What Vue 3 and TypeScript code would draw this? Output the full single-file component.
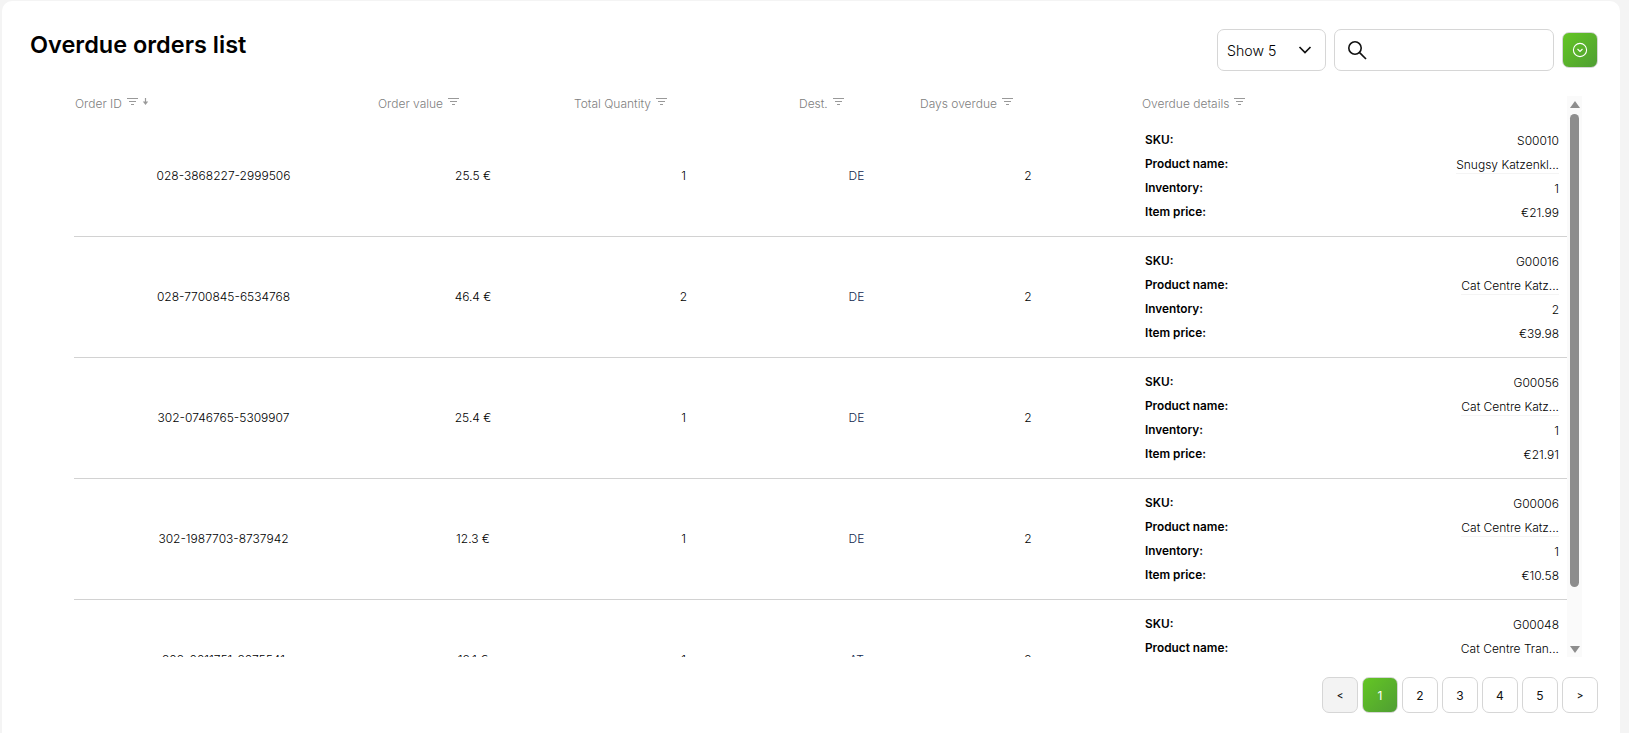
<script setup lang="ts">
import { ref } from 'vue'

interface Order {
  id: string
  value: string
  qty: number
  dest: string
  days: number
  sku: string
  name: string
  inventory: number
  price: string
}

const orders = ref<Order[]>([
  { id: '028-3868227-2999506', value: '25.5 €', qty: 1, dest: 'DE', days: 2, sku: 'S00010', name: 'Snugsy Katzenkl...', inventory: 1, price: '€21.99' },
  { id: '028-7700845-6534768', value: '46.4 €', qty: 2, dest: 'DE', days: 2, sku: 'G00016', name: 'Cat Centre Katz...', inventory: 2, price: '€39.98' },
  { id: '302-0746765-5309907', value: '25.4 €', qty: 1, dest: 'DE', days: 2, sku: 'G00056', name: 'Cat Centre Katz...', inventory: 1, price: '€21.91' },
  { id: '302-1987703-8737942', value: '12.3 €', qty: 1, dest: 'DE', days: 2, sku: 'G00006', name: 'Cat Centre Katz...', inventory: 1, price: '€10.58' },
  { id: '302-0011751-3075541', value: '18.1 €', qty: 1, dest: 'AT', days: 2, sku: 'G00048', name: 'Cat Centre Tran...', inventory: 1, price: '€15.60' },
])

const headers = ['Order ID', 'Order value', 'Total Quantity', 'Dest.', 'Days overdue', 'Overdue details']
const pages = [1, 2, 3, 4, 5]
</script>

<template>
  <div class="page">
    <section class="card">
      <header class="top">
        <h1>Overdue orders list</h1>
        <div class="tools">
          <div class="select">
            <span>Show 5</span>
            <svg width="14" height="8" viewBox="0 0 14 8" fill="none"><path d="M1.5 1l5.5 5.5L12.5 1" stroke="#111" stroke-width="1.7"/></svg>
          </div>
          <div class="search">
            <svg width="21" height="21" viewBox="0 0 21 21" fill="none"><circle cx="8" cy="8" r="6.2" stroke="#111" stroke-width="1.6"/><path d="M12.600 12.600L19 19" stroke="#111" stroke-width="1.7"/></svg>
          </div>
          <button class="go" type="button">
            <svg width="16" height="16" viewBox="0 0 16 16" fill="none"><circle cx="8" cy="8" r="6.6" stroke="#fff" stroke-width="1.1"/><path d="M5.5 7l2.5 2.5L10.500 7" stroke="#fff" stroke-width="1.1"/></svg>
          </button>
        </div>
      </header>

      <div class="table-wrap">
        <div class="table">
          <div class="row head">
            <div v-for="(h, i) in headers" :key="h" class="th">
              {{ h }}
              <svg class="filter" width="11" height="8" viewBox="0 0 11 8"><path d="M0 .5h11M2 3.500h7M4 6.500h3" stroke="#999" stroke-width="1"/></svg>
              <svg v-if="i === 0" class="sort" width="7" height="8" viewBox="0 0 7 8"><path d="M3.500 0v4" stroke="#999" stroke-width="1.200"/><path d="M.8 3.500h5.400L3.500 7z" fill="#999"/></svg>
            </div>
          </div>
          <div v-for="o in orders" :key="o.id" class="row body">
            <div class="td">{{ o.id }}</div>
            <div class="td">{{ o.value }}</div>
            <div class="td">{{ o.qty }}</div>
            <div class="td dest">{{ o.dest }}</div>
            <div class="td">{{ o.days }}</div>
            <dl class="details">
              <div><dt>SKU:</dt><dd>{{ o.sku }}</dd></div>
              <div><dt>Product name:</dt><dd class="name">{{ o.name }}</dd></div>
              <div><dt>Inventory:</dt><dd>{{ o.inventory }}</dd></div>
              <div><dt>Item price:</dt><dd>{{ o.price }}</dd></div>
            </dl>
          </div>
        </div>
        <div class="scrollbar" aria-hidden="true">
          <i class="up"></i>
          <i class="thumb"></i>
          <i class="down"></i>
        </div>
      </div>

      <nav class="pager">
        <button class="pg arrow prev" type="button">&lt;</button>
        <button v-for="p in pages" :key="p" class="pg" :class="{ on: p === 1 }" type="button">{{ p }}</button>
        <button class="pg arrow" type="button">&gt;</button>
      </nav>
    </section>
  </div>
</template>

<style scoped>
.page {
  height: 733px;
  box-sizing: border-box;
  padding: 1px 9px 0 2px;
  background: #f4f4f4;
  overflow: hidden;
  font-family: Inter, "Liberation Sans", sans-serif;
  color: #111;
}
.card {
  height: 760px;
  box-sizing: border-box;
  padding: 29px 22px 0 28px;
  background: #fff;
  border-radius: 10px;
}
.top {
  display: flex;
  justify-content: space-between;
  height: 66px;
}
h1 {
  margin: 0;
  padding-top: 1px;
  font-size: 23.500px;
  line-height: 28px;
  font-weight: 600;
  color: #000;
}
.tools {
  display: flex;
  align-items: center;
  height: 42px;
  margin-top: -1px;
}
.select,
.search {
  box-sizing: border-box;
  height: 42px;
  display: flex;
  align-items: center;
  border: 1px solid #d6d6d6;
  border-radius: 7px;
}
.select {
  width: 109px;
  padding: 0 13px 0 9px;
  justify-content: space-between;
  font-size: 14.200px;
  font-weight: 300;
  color: #000;
  margin-right: 8px;
}
.search {
  width: 220px;
  padding-left: 12px;
  margin-right: 8px;
}
.go {
  width: 36px;
  height: 36px;
  padding: 0;
  display: flex;
  align-items: center;
  justify-content: center;
  border: 1px solid #d6d6d6;
  border-radius: 7px;
  background: linear-gradient(135deg, #64c624, #4f9e33);
}
.table-wrap {
  position: relative;
  margin-left: 44px;
  width: 1508px;
  height: 561px;
  overflow: hidden;
}
.table {
  width: 1493px;
}
.row {
  display: grid;
  grid-template-columns: 303px 196px 225px 121px 222px 426px;
}
.head {
  height: 20px;
  align-items: start;
  font-size: 12px;
  font-weight: 300;
  color: #808080;
}
.th {
  padding-left: 1px;
  display: flex;
  align-items: center;
  gap: 5px;
  height: 15px;
}
.sort {
  margin-left: -1px;
  margin-top: -3px;
}
.filter {
  margin-top: -3px;
}
.body {
  height: 121px;
  align-items: center;
  box-sizing: border-box;
  border-bottom: 1px solid #d2d2d2;
  font-size: 12px;
  font-weight: 300;
  color: #000;
}
.td {
  text-align: center;
  padding: 0 4px 2px 0;
}
.dest {
  color: #13284f;
}
.details {
  margin: 0;
  padding: 0 8px 0 4px;
  display: flex;
  flex-direction: column;
  gap: 5px;
}
.details > div {
  display: flex;
  justify-content: space-between;
  height: 19px;
  line-height: 19px;
}
dt {
  font-weight: 600;
  font-size: 11.800px;
  color: #000;
}
dd {
  margin: 0;
}
.name {
  border-bottom: 1px solid #f4f4f4;
}
.scrollbar {
  position: absolute;
  top: 0;
  right: 0;
  bottom: 0;
  width: 15px;
  background: #fafafa;
}
.thumb {
  position: absolute;
  left: 3px;
  top: 18px;
  width: 9px;
  height: 473px;
  border-radius: 5px;
  background: #8d8d8d;
}
.up,
.down {
  position: absolute;
  left: 2.500px;
  width: 0;
  height: 0;
  border-left: 5px solid transparent;
  border-right: 5px solid transparent;
}
.up {
  top: 5px;
  border-bottom: 7px solid #8d8d8d;
}
.down {
  bottom: 4px;
  border-top: 7px solid #8d8d8d;
}
.pager {
  display: flex;
  justify-content: flex-end;
  gap: 4px;
  margin-top: 20px;
}
.pg {
  box-sizing: border-box;
  width: 36px;
  height: 36px;
  padding: 0;
  border: 1px solid #d6d6d6;
  border-radius: 7px;
  background: #fff;
  color: #111;
  font: 400 12px Inter, "Liberation Sans", sans-serif;
}
.arrow {
  font-size: 10px;
  font-weight: 500;
}
.prev {
  background: #f3f3f3;
}
.on {
  background: linear-gradient(135deg, #64c624, #4f9e33);
  color: #fff;
}
</style>

<style>
html, body { margin: 0; background: #f4f4f4; overflow: hidden; }
</style>
